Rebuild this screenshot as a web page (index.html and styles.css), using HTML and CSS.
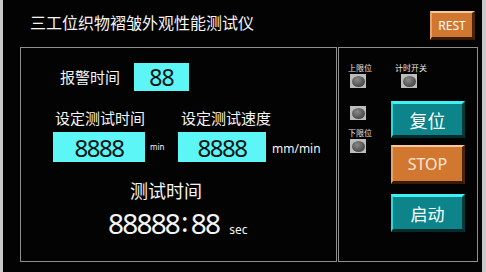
FILE: index.html
```html
<!DOCTYPE html>
<html>
	<head>
		<meta charset="utf-8">
		<title>三工位织物褶皱外观性能测试仪</title>
		<link rel="stylesheet" href="styles.css">
	</head>
	<body>
		<div class="screen">
			<div class="header">
				<span class="title">三工位织物褶皱外观性能测试仪</span>
				<div class="btn btn-orange btn-rest">REST</div>
			</div>
			<div class="main">
				<div class="panel left">
					<div class="row alarm">
						<span class="label alarm-label">报警时间</span>
						<div class="value alarm-value">88</div>
					</div>
					<div class="row set-labels">
						<span class="label set1">设定测试时间</span>
						<span class="label set2">设定测试速度</span>
					</div>
					<div class="row set-values">
						<div class="value big v1">8888</div>
						<span class="unit-min">min</span>
						<div class="value big v2">8888</div>
						<span class="unit-speed">mm/min</span>
					</div>
					<div class="test-title">测试时间</div>
					<div class="row test-time">
						<span class="clock">88888<span class="colon">:</span>88</span>
						<span class="unit-sec">sec</span>
					</div>
				</div>
				<div class="panel right">
					<div class="col lamps">
						<span class="small">上限位</span>
						<div class="led"></div>
						<div class="led led2"></div>
						<span class="small lower">下限位</span>
						<div class="led"></div>
					</div>
					<div class="col controls">
						<span class="small timer">计时开关</span>
						<div class="led timer-led"></div>
						<div class="btn btn-teal btn-big b-reset">复位</div>
						<div class="btn btn-orange btn-big b-stop">STOP</div>
						<div class="btn btn-teal btn-big b-start">启动</div>
					</div>
				</div>
			</div>
		</div>
	</body>
</html>
```

FILE: styles.css
```css
body{
	margin: 0;
	padding: 0;
	background: #c8c8c8;
	font-family: "Noto Sans", "Noto Sans CJK SC", sans-serif;
	color: #f4f4f4;
}
.screen{
	margin: 0 4px 0 3px;
	height: 272px;
	background: #030303;
}
.header{
	height: 47px;
	display: flex;
	align-items: flex-start;
	justify-content: space-between;
}
.title{
	margin: 11px 0 0 27px;
	font-size: 16px;
	line-height: 22px;
	font-family: "Noto Sans CJK SC", sans-serif;
}
.btn{
	box-sizing: border-box;
	display: flex;
	align-items: center;
	justify-content: center;
	color: #fff;
	border-style: solid;
}
.btn-orange{
	background: #d2772f;
	border-width: 2px 3px 3px 2px;
	border-color: #f6c89a #4a2308 #3a1a06 #e8a468;
}
.btn-teal{
	background: #0d8489;
	border-width: 3px 3px 3px 2px;
	border-color: #3ff2f2 #033a3c #032a2c #2fd8d8;
}
.btn-rest{
	margin: 11px 7px 0 0;
	width: 45px;
	height: 29px;
	font-size: 12px;
}
.main{
	display: flex;
	gap: 1px;
	margin-left: 17px;
}
.panel{
	box-sizing: border-box;
	height: 215px;
	border: 1px solid #8e8e8e;
}
.left{
	width: 317px;
}
.right{
	width: 140px;
	display: flex;
}
.row{
	display: flex;
	align-items: center;
}
.label{
	font-size: 15px;
	line-height: 20px;
	font-family: "Noto Sans CJK SC", sans-serif;
}
.value{
	box-sizing: border-box;
	background: #5cf6f6;
	color: #0a1414;
	display: flex;
	align-items: center;
	justify-content: center;
}
.alarm{
	margin-top: 15px;
	padding-left: 39px;
}
.alarm-label{
	width: 74px;
}
.alarm-value{
	width: 55px;
	height: 28px;
	font-size: 23px;
	letter-spacing: -1px;
}
.set-labels{
	margin-top: 17px;
	padding-left: 34px;
}
.set1{
	width: 126px;
}
.set-values{
	margin-top: 4px;
	padding-left: 32px;
	align-items: flex-end;
}
.big{
	height: 30px;
	font-size: 24px;
	letter-spacing: -1.5px;
}
.v1{
	width: 92px;
}
.v2{
	width: 88px;
}
.unit-min{
	font-size: 8px;
	width: 33px;
	padding-left: 5px;
	box-sizing: border-box;
	margin-bottom: 10px;
}
.unit-speed{
	font-size: 12px;
	padding-left: 6px;
	margin-bottom: 5px;
}
.test-title{
	margin-top: 16px;
	padding-left: 109px;
	font-size: 18px;
	line-height: 24px;
	font-family: "Noto Sans CJK SC", sans-serif;
}
.test-time{
	margin-top: 4px;
	padding-left: 87px;
	align-items: baseline;
}
.clock{
	font-size: 28px;
	line-height: 34px;
	letter-spacing: -1.8px;
}
.colon{
	padding: 0 4px 0 2px;
	position: relative;
	top: -2px;
}
.unit-sec{
	font-size: 12px;
	padding-left: 10px;
}
.col{
	display: flex;
	flex-direction: column;
}
.small{
	font-size: 8px;
	line-height: 10px;
	font-family: "Noto Sans CJK SC", sans-serif;
	color: #e8e8e8;
}
.lamps{
	margin-left: 9px;
	padding-top: 15px;
	width: 43px;
	align-items: flex-start;
}
.led{
	box-sizing: border-box;
	width: 16px;
	height: 14px;
	margin: 1px 0 0 2px;
	background: #bdbdbd;
	display: flex;
	align-items: center;
	justify-content: center;
}
.led::after{
	content: "";
	width: 13px;
	height: 11px;
	border-radius: 50%;
	background: radial-gradient(ellipse at 40% 35%, #8a8a8a, #4a4a4a 70%, #2a2a2a);
}
.led2{
	margin-top: 18px;
}
.lower{
	margin-top: 8px;
}
.controls{
	padding-top: 15px;
	width: 76px;
	align-items: flex-start;
}
.timer{
	margin-left: 4px;
}
.timer-led{
	margin-left: 10px;
}
.btn-big{
	width: 74px;
	font-size: 18px;
	font-family: "Noto Sans CJK SC", sans-serif;
}
.b-reset{
	margin-top: 13px;
	height: 37px;
}
.b-stop{
	margin-top: 7px;
	height: 39px;
	font-size: 16px;
	font-family: "Noto Sans", sans-serif;
	color: #fde8d8;
}
.b-start{
	margin-top: 10px;
	height: 38px;
	font-size: 17px;
}
```
